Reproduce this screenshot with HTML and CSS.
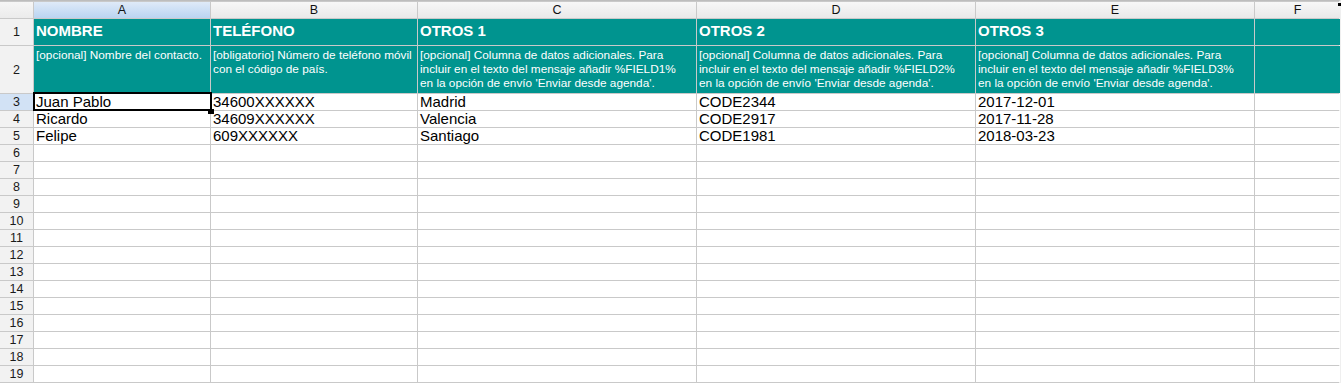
FILE: index.html
```html
<!DOCTYPE html>
<html lang="es">
<head>
<meta charset="utf-8">
<title>Hoja de contactos</title>
<link rel="stylesheet" href="styles.css">
</head>
<body>
<div class="sheet">
  <div class="corner"></div>
  <div class="ch active">A</div>
  <div class="ch">B</div>
  <div class="ch">C</div>
  <div class="ch">D</div>
  <div class="ch">E</div>
  <div class="ch">F</div>

  <div class="rh">1</div>
  <div class="t1">NOMBRE</div>
  <div class="t1">TELÉFONO</div>
  <div class="t1">OTROS 1</div>
  <div class="t1">OTROS 2</div>
  <div class="t1">OTROS 3</div>
  <div class="t1"></div>

  <div class="rh">2</div>
  <div class="t2">[opcional] Nombre del contacto.</div>
  <div class="t2">[obligatorio] Número de teléfono móvil con el código de país.</div>
  <div class="t2 wide">[opcional] Columna de datos adicionales. Para incluir en el texto del mensaje añadir %FIELD1% en la opción de envío 'Enviar desde agenda'.</div>
  <div class="t2 wide">[opcional] Columna de datos adicionales. Para incluir en el texto del mensaje añadir %FIELD2% en la opción de envío 'Enviar desde agenda'.</div>
  <div class="t2 wide">[opcional] Columna de datos adicionales. Para incluir en el texto del mensaje añadir %FIELD3% en la opción de envío 'Enviar desde agenda'.</div>
  <div class="t2"></div>

  <div class="rh active">3</div>
  <div class="c sel">Juan Pablo</div>
  <div class="c">34600XXXXXX</div>
  <div class="c">Madrid</div>
  <div class="c">CODE2344</div>
  <div class="c">2017-12-01</div>
  <div class="c"></div>

  <div class="rh">4</div>
  <div class="c">Ricardo</div>
  <div class="c">34609XXXXXX</div>
  <div class="c">Valencia</div>
  <div class="c">CODE2917</div>
  <div class="c">2017-11-28</div>
  <div class="c"></div>

  <div class="rh">5</div>
  <div class="c">Felipe</div>
  <div class="c">609XXXXXX</div>
  <div class="c">Santiago</div>
  <div class="c">CODE1981</div>
  <div class="c">2018-03-23</div>
  <div class="c"></div>

  <div class="rh">6</div><div class="c"></div><div class="c"></div><div class="c"></div><div class="c"></div><div class="c"></div><div class="c"></div>
  <div class="rh">7</div><div class="c"></div><div class="c"></div><div class="c"></div><div class="c"></div><div class="c"></div><div class="c"></div>
  <div class="rh">8</div><div class="c"></div><div class="c"></div><div class="c"></div><div class="c"></div><div class="c"></div><div class="c"></div>
  <div class="rh">9</div><div class="c"></div><div class="c"></div><div class="c"></div><div class="c"></div><div class="c"></div><div class="c"></div>
  <div class="rh">10</div><div class="c"></div><div class="c"></div><div class="c"></div><div class="c"></div><div class="c"></div><div class="c"></div>
  <div class="rh">11</div><div class="c"></div><div class="c"></div><div class="c"></div><div class="c"></div><div class="c"></div><div class="c"></div>
  <div class="rh">12</div><div class="c"></div><div class="c"></div><div class="c"></div><div class="c"></div><div class="c"></div><div class="c"></div>
  <div class="rh">13</div><div class="c"></div><div class="c"></div><div class="c"></div><div class="c"></div><div class="c"></div><div class="c"></div>
  <div class="rh">14</div><div class="c"></div><div class="c"></div><div class="c"></div><div class="c"></div><div class="c"></div><div class="c"></div>
  <div class="rh">15</div><div class="c"></div><div class="c"></div><div class="c"></div><div class="c"></div><div class="c"></div><div class="c"></div>
  <div class="rh">16</div><div class="c"></div><div class="c"></div><div class="c"></div><div class="c"></div><div class="c"></div><div class="c"></div>
  <div class="rh">17</div><div class="c"></div><div class="c"></div><div class="c"></div><div class="c"></div><div class="c"></div><div class="c"></div>
  <div class="rh">18</div><div class="c"></div><div class="c"></div><div class="c"></div><div class="c"></div><div class="c"></div><div class="c"></div>
  <div class="rh">19</div><div class="c"></div><div class="c"></div><div class="c"></div><div class="c"></div><div class="c"></div><div class="c"></div>
  <div class="rh"></div><div class="c"></div><div class="c"></div><div class="c"></div><div class="c"></div><div class="c"></div><div class="c"></div>
  <span class="corner-mark"></span>
</div>
</body>
</html>
```

FILE: styles.css
```css
html, body {
  margin: 0;
  padding: 0;
  background: #ffffff;
  overflow: hidden;
}

body {
  width: 1343px;
  height: 385px;
  font-family: "Liberation Sans", Arial, sans-serif;
  color: #000;
}

.sheet {
  position: relative;
  display: grid;
  grid-template-columns: 33px 176px 206px 278px 278px 278px 85px;
  grid-template-rows: 16px 26px 47px repeat(17, 16px);
  gap: 1px;
  width: 1338px;
  background: #c9c9c9;
  border-top: 1px solid #bdbdbd;
  padding-top: 1px;
  padding-right: 1px;
  border-right: 2px solid #efefef;
}

.corner {
  background: linear-gradient(#f6f6f6, #ebebeb);
}

.ch {
  background: linear-gradient(#f7f7f7, #e9e9e9);
  font-size: 12.5px;
  line-height: 16px;
  text-align: center;
  color: #111;
}

.ch.active {
  background: linear-gradient(#dfeaf8, #bad4f1);
}

.rh {
  background: #f2f2f2;
  font-size: 12.5px;
  text-align: center;
  color: #1a1a1a;
  display: flex;
  align-items: center;
  justify-content: center;
}

.rh.active {
  background: #d2e2f5;
}

.t1 {
  background: #00948f;
  color: #ffffff;
  font-weight: bold;
  font-size: 15px;
  line-height: 18px;
  padding: 3px 2px 0;
  white-space: nowrap;
  overflow: hidden;
}

.t2 {
  background: #00948f;
  color: #ffffff;
  font-size: 11.8px;
  line-height: 14px;
  padding: 2px 1px 0 2px;
  overflow: hidden;
}

.t2.wide {
  padding-right: 14px;
}

.c {
  background: #ffffff;
  font-size: 15px;
  line-height: 16px;
  padding: 0 2px;
  white-space: nowrap;
  overflow: hidden;
}

.c.sel {
  position: relative;
  overflow: visible;
}

.c.sel::after {
  content: "";
  position: absolute;
  top: -2px;
  left: -1px;
  right: -2px;
  bottom: -1px;
  border: 2px solid #000;
  pointer-events: none;
}

.c.sel::before {
  content: "";
  position: absolute;
  right: -4px;
  bottom: -4px;
  width: 6px;
  height: 5px;
  background: #000;
  z-index: 2;
}

.corner-mark {
  position: absolute;
  top: 2px;
  right: -2px;
  width: 3px;
  height: 3px;
  background: #000;
}
```
